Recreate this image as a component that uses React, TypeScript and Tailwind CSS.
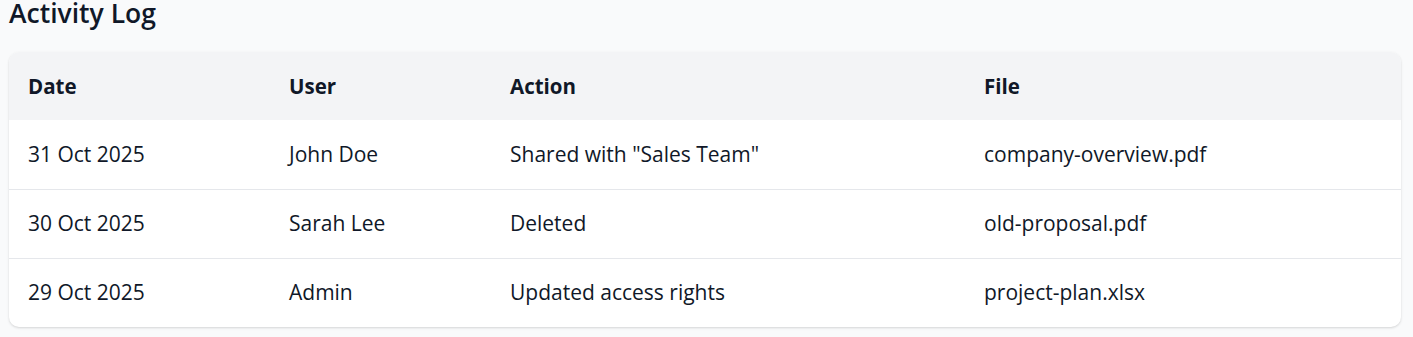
const rows = [
  { date: '31 Oct 2025', user: 'John Doe', action: 'Shared with "Sales Team"', file: 'company-overview.pdf' },
  { date: '30 Oct 2025', user: 'Sarah Lee', action: 'Deleted', file: 'old-proposal.pdf' },
  { date: '29 Oct 2025', user: 'Admin', action: 'Updated access rights', file: 'project-plan.xlsx' },
];

export default function App() {
  return (
    <div className="min-h-screen bg-gray-50 pl-[9px] pr-[12px] font-['Open_Sans',sans-serif] text-gray-900">
      {/* Title */}
      <h2 className="text-[26.5px] font-semibold leading-[26px]">Activity Log</h2>

      {/* Table card */}
      <div className="mt-[26px] overflow-hidden rounded-[10px] bg-white shadow-[0_1px_3px_rgba(0,0,0,0.1),0_1px_2px_rgba(0,0,0,0.06)]">
        <table className="w-full table-fixed border-collapse text-left text-[21px]">
          <colgroup>
            <col className="w-[280px]" />
            <col className="w-[221px]" />
            <col className="w-[474px]" />
            <col />
          </colgroup>
          <thead className="bg-gray-100">
            <tr className="h-[68px] text-[20.5px]">
              <th className="pl-[19px] font-bold">Date</th>
              <th className="font-bold">User</th>
              <th className="font-bold">Action</th>
              <th className="font-bold">File</th>
            </tr>
          </thead>
          <tbody>
            {rows.map((row, i) => (
              <tr key={i} className={`h-[69px] ${i > 0 ? 'border-t border-gray-200' : ''}`}>
                <td className="pl-[19px]">{row.date}</td>
                <td>{row.user}</td>
                <td>{row.action}</td>
                <td>{row.file}</td>
              </tr>
            ))}
          </tbody>
        </table>
      </div>
    </div>
  );
}
